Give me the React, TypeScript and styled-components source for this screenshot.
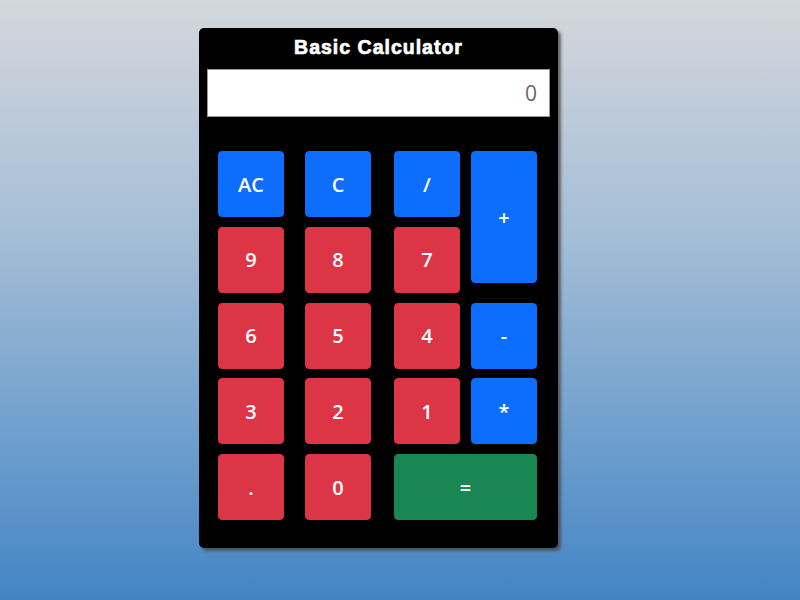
import React from "react";
import styled, { createGlobalStyle } from "styled-components";

const Global = createGlobalStyle`
  html, body { margin: 0; padding: 0; }
  body {
    min-height: 600px;
    background: linear-gradient(to bottom, #d4d7dc 0%, #a3bdd6 40%, #4385c5 100%);
    font-family: "Open Sans", "Noto Sans", sans-serif;
  }
`;

const Page = styled.div`
  display: flex;
  padding: 28px 0 0 199px;
`;

const Card = styled.div`
  width: 359px;
  height: 520px;
  box-sizing: border-box;
  background: #000;
  border-radius: 5px;
  box-shadow: 3px 3px 3px rgba(70, 70, 70, 0.75);
  padding: 8px 8px 0 8px;
  display: flex;
  flex-direction: column;
`;

const Title = styled.h1`
  margin: 0;
  color: #fff;
  font-family: "Liberation Sans", Arial, sans-serif;
  font-weight: 700;
  font-size: 19.5px;
  line-height: 22px;
  letter-spacing: 1px;
  text-align: center;
  -webkit-text-stroke: 0.7px #fff;
`;

const Display = styled.div`
  margin-top: 11px;
  height: 48px;
  box-sizing: border-box;
  background: #fff;
  border: 1px solid #999;
  color: #666;
  font-family: "Open Sans", "Noto Sans", sans-serif;
  font-size: 21px;
  display: flex;
  align-items: center;
  justify-content: flex-end;
  padding-right: 12px;
`;

const Keys = styled.div`
  margin: 34px 0 0 11px;
  display: grid;
  grid-template-columns: 87px 89px 77px 66px;
  grid-auto-rows: 66px;
  row-gap: 9.75px;
`;

type Variant = "primary" | "danger" | "success";
const colors: Record<Variant, string> = {
  primary: "#0d6efd",
  danger: "#dc3545",
  success: "#198754",
};

const Key = styled.button<{ $v: Variant; $wide?: boolean; $tall?: boolean }>`
  box-sizing: border-box;
  width: ${(p) => (p.$wide ? "143px" : "66px")};
  height: ${(p) => (p.$tall ? "132px" : "66px")};
  grid-column: ${(p) => (p.$wide ? "span 2" : "auto")};
  grid-row: ${(p) => (p.$tall ? "span 2" : "auto")};
  align-self: start;
  border: 1px solid ${(p) => colors[p.$v]};
  border-radius: 4px;
  background: ${(p) => colors[p.$v]};
  color: #fff;
  font-family: "Open Sans", "Noto Sans", sans-serif;
  font-weight: 600;
  font-size: 20px;
  padding: 0;
  display: flex;
  align-items: center;
  justify-content: center;
  cursor: pointer;
`;

export default function App() {
  return (
    <>
      <Global />
      <Page>
        <Card>
          <Title>Basic Calculator</Title>
          <Display>0</Display>
          <Keys>
            <Key $v="primary">AC</Key>
            <Key $v="primary">C</Key>
            <Key $v="primary">/</Key>
            <Key $v="primary" $tall>+</Key>
            <Key $v="danger">9</Key>
            <Key $v="danger">8</Key>
            <Key $v="danger">7</Key>
            <Key $v="danger">6</Key>
            <Key $v="danger">5</Key>
            <Key $v="danger">4</Key>
            <Key $v="primary">-</Key>
            <Key $v="danger">3</Key>
            <Key $v="danger">2</Key>
            <Key $v="danger">1</Key>
            <Key $v="primary">*</Key>
            <Key $v="danger">.</Key>
            <Key $v="danger">0</Key>
            <Key $v="success" $wide>=</Key>
          </Keys>
        </Card>
      </Page>
    </>
  );
}
